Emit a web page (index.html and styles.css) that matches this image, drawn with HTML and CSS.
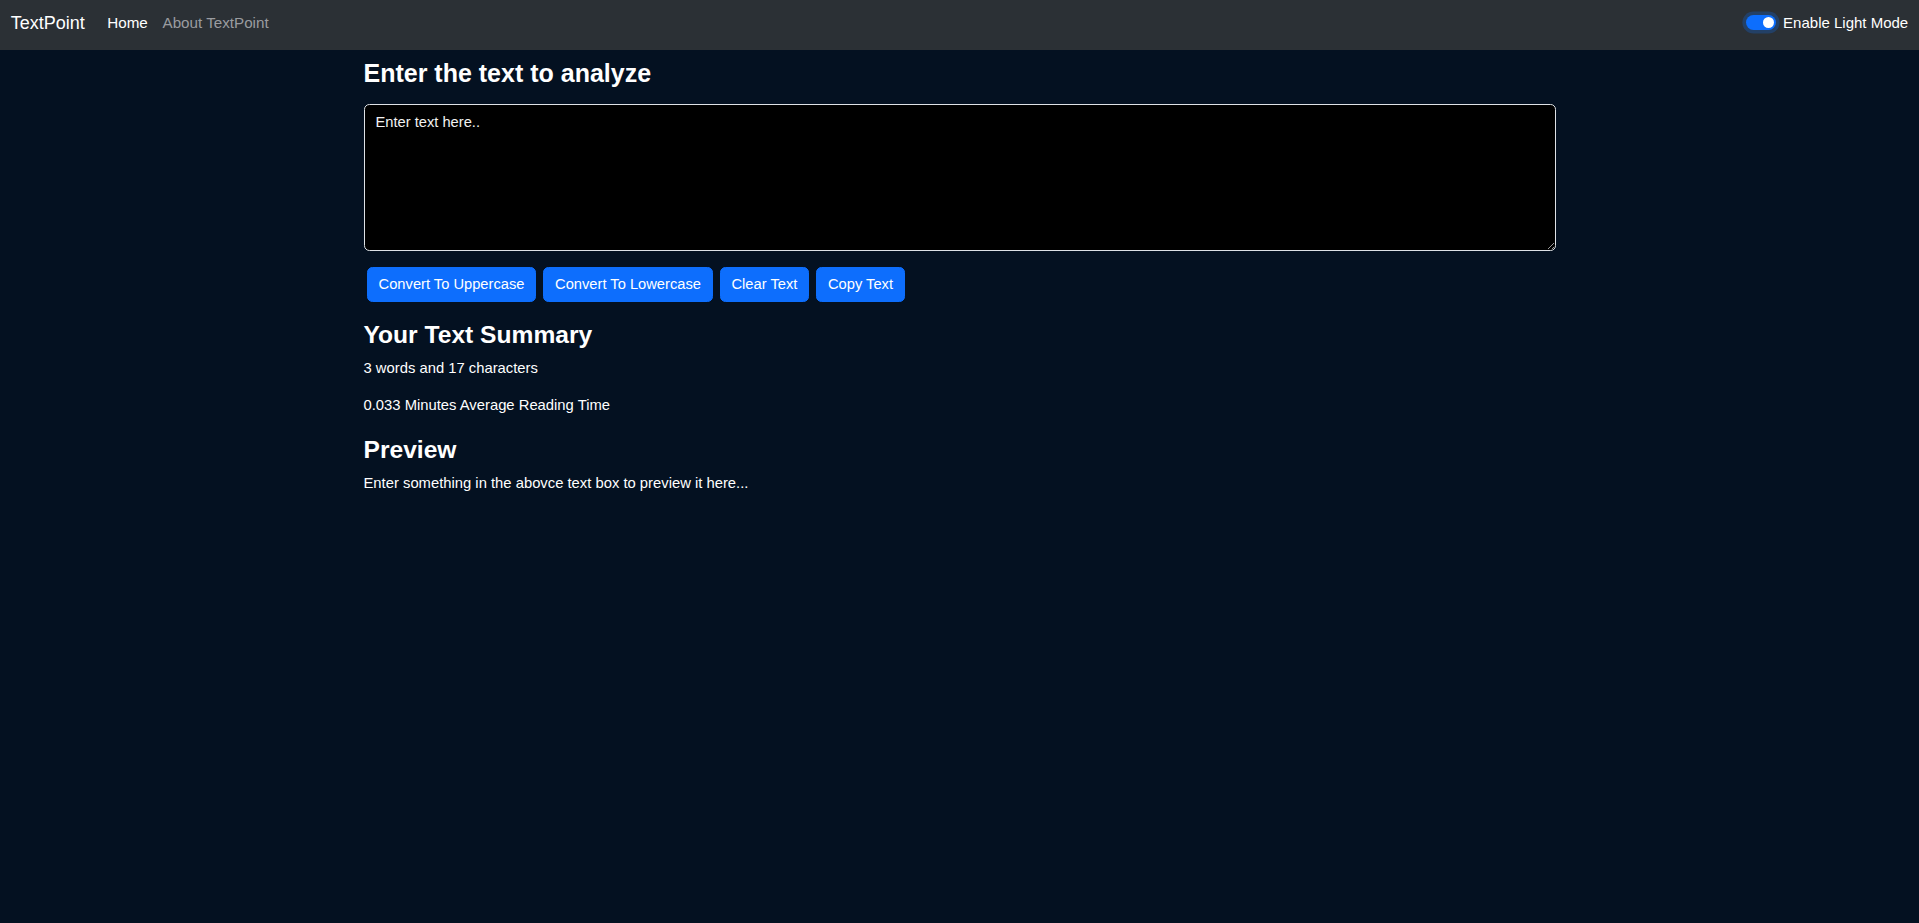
FILE: index.html
```html
<!DOCTYPE html>
<html lang="en">
<head>
<meta charset="utf-8">
<title>TextPoint</title>
<link rel="stylesheet" href="styles.css">
</head>
<body>
<nav class="navbar">
  <div class="nav-left">
    <a class="brand" href="#">TextPoint</a>
    <ul class="nav-links">
      <li><a class="nav-link active" href="#">Home</a></li>
      <li><a class="nav-link" href="#">About TextPoint</a></li>
    </ul>
  </div>
  <label class="mode-switch">
    <span class="switch"><span class="knob"></span></span>
    <span class="switch-label">Enable Light Mode</span>
  </label>
</nav>
<main class="container">
  <h1 class="title">Enter the text to analyze</h1>
  <textarea class="text-input" placeholder="Enter text here.."></textarea>
  <div class="actions">
    <button class="btn">Convert To Uppercase</button>
    <button class="btn">Convert To Lowercase</button>
    <button class="btn">Clear Text</button>
    <button class="btn">Copy Text</button>
  </div>
  <h2 class="section-title">Your Text Summary</h2>
  <p class="info">3 words and 17 characters</p>
  <p class="info">0.033 Minutes Average Reading Time</p>
  <h2 class="section-title">Preview</h2>
  <p class="info">Enter something in the abovce text box to preview it here...</p>
</main>
</body>
</html>
```

FILE: styles.css
```css
* {
  box-sizing: border-box;
}

html, body {
  margin: 0;
  padding: 0;
}

body {
  background: #041121;
  color: #ffffff;
  font-family: "Liberation Sans", Arial, sans-serif;
  font-size: 14.8px;
  line-height: 1.5;
  min-height: 923px;
}

.navbar {
  height: 50px;
  background: #2b3035;
  display: flex;
  align-items: center;
  justify-content: space-between;
  padding: 0 10.8px 3px 10.8px;
}

.nav-left {
  display: flex;
  align-items: center;
}

.brand {
  color: #ffffff;
  text-decoration: none;
  font-size: 18px;
  line-height: 1.5;
  margin-right: 15px;
}

.nav-links {
  list-style: none;
  margin: 0;
  padding: 0;
  display: flex;
}

.nav-link {
  display: block;
  padding: 0 7.4px;
  font-size: 15.2px;
  line-height: 1.5;
  color: #9a9ca0;
  text-decoration: none;
}

.nav-link.active {
  color: #ffffff;
}

.mode-switch {
  display: flex;
  align-items: center;
  font-size: 15px;
  line-height: 1.5;
  color: #ffffff;
}

.switch {
  width: 30px;
  height: 15px;
  border-radius: 8px;
  background: #0d6efd;
  box-shadow: 0 0 0 3.6px rgba(13, 110, 253, 0.25);
  display: flex;
  align-items: center;
  justify-content: flex-end;
  padding-right: 2px;
  margin-right: 7px;
  margin-bottom: 3px;
}

.knob {
  width: 11px;
  height: 11px;
  border-radius: 50%;
  background: #ffffff;
}

.container {
  width: 1192px;
  margin: 0 auto;
  padding-top: 8px;
}

.title,
.section-title {
  font-weight: 700;
  line-height: 30px;
}

.title {
  font-size: 25px;
  margin: 0 0 16px 0;
}

.section-title {
  font-size: 24.6px;
  margin: 18px 0 8px 0;
}

.text-input {
  display: block;
  width: 100%;
  height: 147px;
  margin: 0 0 16px 0;
  padding: 6px 11px;
  background: #000000;
  color: #ffffff;
  border: 1px solid #dee2e6;
  border-radius: 5.4px;
  font-family: "Liberation Sans", Arial, sans-serif;
  font-size: 14.7px;
  line-height: 1.5;
}

.text-input::placeholder {
  color: #f2f2f2;
  opacity: 1;
}

.actions {
  display: flex;
  gap: 7.4px;
  padding-left: 3.5px;
}

.btn {
  height: 35px;
  padding: 5.7px 10.6px;
  background: #0d6efd;
  color: #ffffff;
  border: 1px solid #0d6efd;
  border-radius: 5.4px;
  font-family: "Liberation Sans", Arial, sans-serif;
  font-size: 14.7px;
  line-height: 21.6px;
  cursor: pointer;
}

.info {
  margin: 0 0 15.4px 0;
  line-height: 21.6px;
}
```
